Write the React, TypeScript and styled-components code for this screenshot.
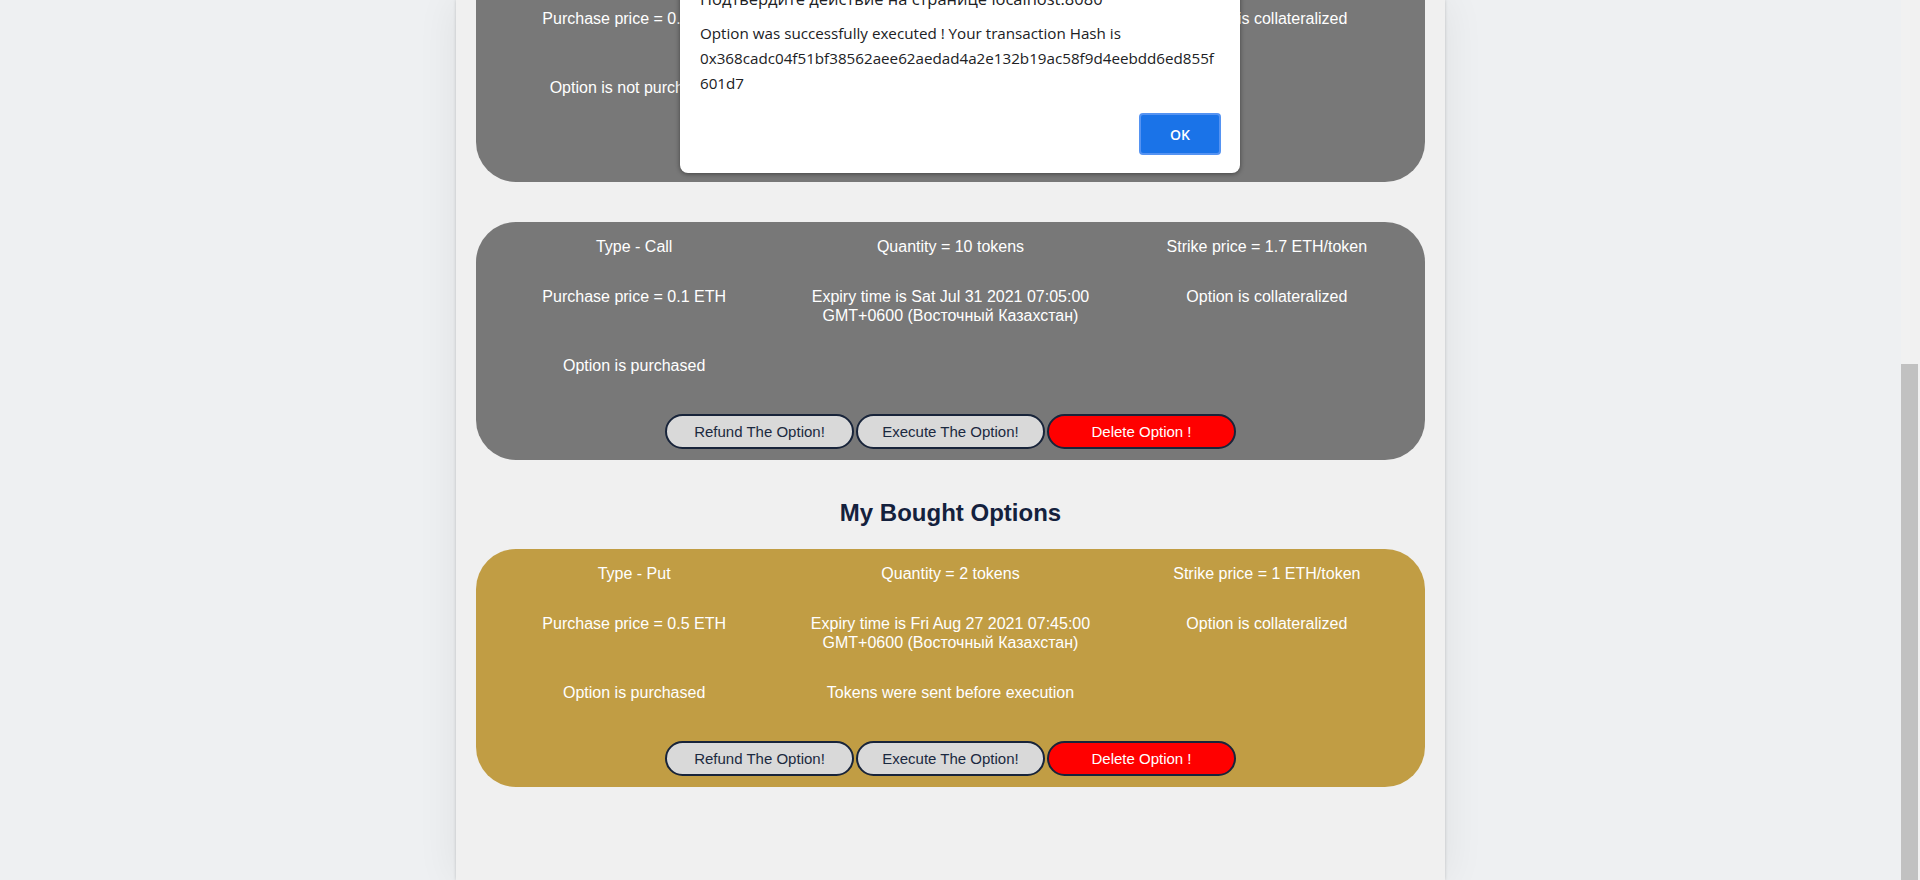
import React from "react";
import styled, { createGlobalStyle } from "styled-components";

const GlobalStyle = createGlobalStyle`
  html, body {
    margin: 0;
    padding: 0;
    height: 100%;
    overflow: hidden;
    background: #eef0f2;
  }
`;

const Page = styled.div`
  position: relative;
  display: flex;
  height: 880px;
  overflow: hidden;
  background: #eef0f2;
  font-family: "Liberation Sans", Arial, sans-serif;
`;

const Main = styled.div`
  flex: 1;
  min-width: 0;
  display: flex;
  justify-content: center;
`;

const Column = styled.main`
  width: 989px;
  box-sizing: border-box;
  padding: 0 20px;
  background: #f0f0f0;
  box-shadow: 0 0 3px rgba(0, 0, 0, 0.18), 0 0 40px rgba(0, 0, 0, 0.07);
  display: flex;
  flex-direction: column;
`;

const Scrolled = styled.div`
  margin-top: -57px;
  display: flex;
  flex-direction: column;
`;

const CardList = styled.section`
  display: flex;
  flex-direction: column;
  gap: 40px;
`;

const Heading = styled.h2`
  margin: 38.5px 0 22.5px;
  text-align: center;
  font-size: 24px;
  line-height: 27.6px;
  font-weight: bold;
  color: #14213d;
`;

const Card = styled.article<{ $tone: "gray" | "gold" }>`
  display: flex;
  flex-direction: column;
  border-radius: 40px;
  padding-bottom: 11.5px;
  background: ${(p) => (p.$tone === "gold" ? "#c19d44" : "#787878")};
  color: #ffffff;
`;

const Fields = styled.div`
  display: grid;
  grid-template-columns: repeat(3, 1fr);
`;

const Field = styled.p`
  margin: 16px 0;
  font-size: 16px;
  line-height: 18.5px;
  text-align: center;
`;

const Actions = styled.div`
  margin-top: 22px;
  display: flex;
  justify-content: center;
  gap: 2px;
`;

const ActionButton = styled.button<{ $danger?: boolean }>`
  width: 189px;
  height: 35px;
  box-sizing: border-box;
  border: 2px solid #18243a;
  border-radius: 18px;
  background: ${(p) => (p.$danger ? "#ff0000" : "#d9d9d9")};
  color: ${(p) => (p.$danger ? "#ffffff" : "#1b2940")};
  font-family: "Liberation Sans", Arial, sans-serif;
  font-size: 15px;
  padding: 0;
  cursor: pointer;
`;

const ScrollTrack = styled.div`
  width: 19px;
  display: flex;
  flex-direction: column;
  background: #f1f1f1;
`;

const ScrollThumb = styled.div`
  margin-top: 364px;
  flex: 1;
  width: 17px;
  background: #c1c1c1;
`;

const Dialog = styled.div`
  position: absolute;
  top: -33px;
  left: 50%;
  transform: translateX(-50%);
  width: 560px;
  box-sizing: border-box;
  padding: 20px 19px 18px 20px;
  background: #ffffff;
  border-radius: 8px;
  box-shadow: 0 1px 5px rgba(0, 0, 0, 0.45);
  font-family: "Open Sans", "Noto Sans", sans-serif;
  color: #202124;
`;

const DialogTitle = styled.div`
  font-size: 16.5px;
  line-height: 24px;
`;

const DialogMessage = styled.div`
  margin-top: 9.5px;
  font-size: 15.2px;
  line-height: 25px;
  overflow-wrap: anywhere;
`;

const DialogActions = styled.div`
  margin-top: 17.5px;
  display: flex;
  justify-content: flex-end;
`;

const OkButton = styled.button`
  width: 82px;
  height: 42px;
  box-sizing: border-box;
  border: 2px solid #5593f2;
  border-radius: 4px;
  background: #1a73e8;
  color: #ffffff;
  font-family: "Open Sans", "Noto Sans", sans-serif;
  font-weight: 600;
  font-size: 14px;
  padding: 0;
`;

type Option = {
  tone: "gray" | "gold";
  fields: string[][];
  actions: { label: string; danger?: boolean }[];
};

const fullActions = [
  { label: "Refund The Option!" },
  { label: "Execute The Option!" },
  { label: "Delete Option !", danger: true },
];

const created: Option[] = [
  {
    tone: "gray",
    fields: [
      ["Type - Put", "Quantity = 5 tokens", "Strike price = 2 ETH/token"],
      [
        "Purchase price = 0.2 ETH",
        "Expiry time is Fri Jul 30 2021 07:05:00 GMT+0600 (Восточный Казахстан)",
        "Option is collateralized",
      ],
      ["Option is not purchased"],
    ],
    actions: [{ label: "Execute The Option!" }, { label: "Delete Option !", danger: true }],
  },
  {
    tone: "gray",
    fields: [
      ["Type - Call", "Quantity = 10 tokens", "Strike price = 1.7 ETH/token"],
      [
        "Purchase price = 0.1 ETH",
        "Expiry time is Sat Jul 31 2021 07:05:00 GMT+0600 (Восточный Казахстан)",
        "Option is collateralized",
      ],
      ["Option is purchased"],
    ],
    actions: fullActions,
  },
];

const bought: Option[] = [
  {
    tone: "gold",
    fields: [
      ["Type - Put", "Quantity = 2 tokens", "Strike price = 1 ETH/token"],
      [
        "Purchase price = 0.5 ETH",
        "Expiry time is Fri Aug 27 2021 07:45:00 GMT+0600 (Восточный Казахстан)",
        "Option is collateralized",
      ],
      ["Option is purchased", "Tokens were sent before execution"],
    ],
    actions: fullActions,
  },
];

function OptionCard({ option }: { option: Option }) {
  return (
    <Card $tone={option.tone}>
      <Fields>
        {option.fields.map((row, r) =>
          [0, 1, 2].map((c) =>
            row[c] !== undefined ? (
              <Field key={`${r}-${c}`}>
                {row[c].startsWith("Expiry") ? (
                  <>
                    {row[c].split(" GMT")[0]}
                    <br />
                    {"GMT" + row[c].split(" GMT")[1]}
                  </>
                ) : (
                  row[c]
                )}
              </Field>
            ) : r < 2 ? (
              <Field key={`${r}-${c}`} />
            ) : null
          )
        )}
      </Fields>
      <Actions>
        {option.actions.map((a) => (
          <ActionButton key={a.label} $danger={a.danger}>
            {a.label}
          </ActionButton>
        ))}
      </Actions>
    </Card>
  );
}

export default function App() {
  return (
    <>
      <GlobalStyle />
      <Page>
        <Main>
          <Column>
            <Scrolled>
              <CardList>
                {created.map((o, i) => (
                  <OptionCard key={i} option={o} />
                ))}
              </CardList>
              <Heading>My Bought Options</Heading>
              <CardList>
                {bought.map((o, i) => (
                  <OptionCard key={i} option={o} />
                ))}
              </CardList>
            </Scrolled>
          </Column>
        </Main>
        <ScrollTrack>
          <ScrollThumb />
        </ScrollTrack>
        <Dialog role="alertdialog">
          <DialogTitle>Подтвердите действие на странице localhost:8080</DialogTitle>
          <DialogMessage>
            Option was successfully executed ! Your transaction Hash is
            0x368cadc04f51bf38562aee62aedad4a2e132b19ac58f9d4eebdd6ed855f601d7
          </DialogMessage>
          <DialogActions>
            <OkButton>OK</OkButton>
          </DialogActions>
        </Dialog>
      </Page>
    </>
  );
}
